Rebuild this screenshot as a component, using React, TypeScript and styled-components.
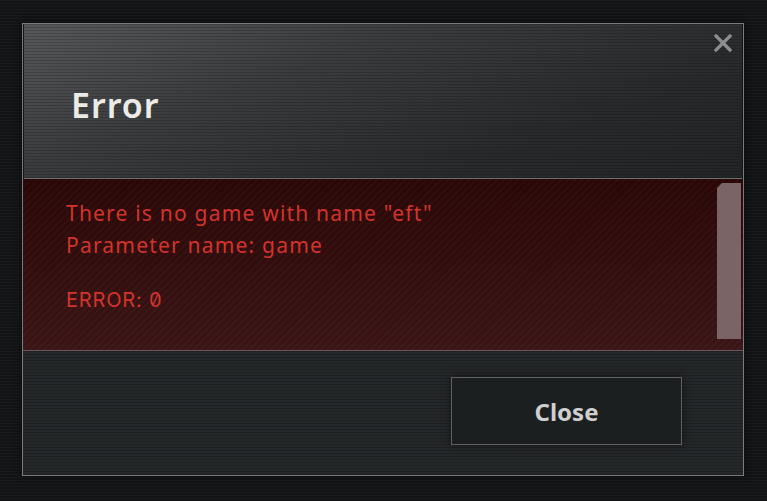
import styled, { createGlobalStyle } from 'styled-components';

const GlobalStyle = createGlobalStyle`
  html, body {
    margin: 0;
    padding: 0;
  }
  body {
    width: 767px;
    height: 501px;
    overflow: hidden;
    background-color: #111315;
    background-image: repeating-linear-gradient(
      180deg,
      rgba(255, 255, 255, 0.03) 0px,
      rgba(255, 255, 255, 0.03) 1px,
      rgba(0, 0, 0, 0) 1px,
      rgba(0, 0, 0, 0) 3px
    );
    font-family: 'Noto Sans', 'DejaVu Sans', sans-serif;
  }
`;

export default () => {
  return (
    <>
      <GlobalStyle />
      <Page>
        <Dialog>
          <Header>
            <Title>Error</Title>
            <CloseIcon aria-label="close">
              <svg width="18" height="18" viewBox="0 0 18 18">
                <path
                  d="M2 2 L16 16 M16 2 L2 16"
                  stroke="#8e8e8e"
                  strokeWidth="3.2"
                  strokeLinecap="square"
                />
              </svg>
            </CloseIcon>
          </Header>
          <Body>
            <Message>
              <Line>There is no game with name "eft"</Line>
              <Line>Parameter name: game</Line>
              <Code>ERROR: 0</Code>
            </Message>
            <Scrollbar />
          </Body>
          <Footer>
            <Button>Close</Button>
          </Footer>
        </Dialog>
      </Page>
    </>
  );
};

const Page = styled.div`
  padding: 23px 0 0 22px;
`;

const Dialog = styled.div`
  width: 722px;
  height: 453px;
  box-sizing: border-box;
  border: 1px solid #7a7b7c;
  display: flex;
  flex-direction: column;
  box-shadow: 0 0 6px rgba(0, 0, 0, 0.6);
`;

const Header = styled.div`
  position: relative;
  height: 155px;
  box-sizing: border-box;
  border-bottom: 1px solid #6e6f70;
  margin: 0 1px;
  display: flex;
  align-items: center;
  padding-left: 47px;
  background-color: #2c2d2f;
  background-image: repeating-linear-gradient(
      180deg,
      rgba(0, 0, 0, 0.18) 0px,
      rgba(0, 0, 0, 0.18) 1px,
      rgba(0, 0, 0, 0) 1px,
      rgba(0, 0, 0, 0) 3px
    ),
    linear-gradient(160deg, #56585a 0%, #3b3c3e 35%, #2a2b2d 70%, #232426 100%);
`;

const Title = styled.div`
  font-size: 34px;
  font-weight: 600;
  letter-spacing: 1px;
  color: #ecebe8;
  margin-top: 8px;
`;

const CloseIcon = styled.div`
  position: absolute;
  top: 10px;
  right: 10px;
  width: 18px;
  height: 18px;
  display: flex;
`;

const Body = styled.div`
  height: 172px;
  box-sizing: border-box;
  border-bottom: 1px solid #6a5a5c;
  display: flex;
  background-color: #300c0c;
  background-image: repeating-linear-gradient(
      135deg,
      rgba(255, 255, 255, 0.025) 0px,
      rgba(255, 255, 255, 0.025) 2px,
      rgba(0, 0, 0, 0) 2px,
      rgba(0, 0, 0, 0) 5px
    ),
    linear-gradient(180deg, #2a0707 0%, #320d0d 50%, #3b1515 100%);
`;

const Message = styled.div`
  flex: 1;
  padding: 18px 0 0 43px;
  color: #d2342c;
  font-size: 21px;
  line-height: 32px;
  letter-spacing: 1.2px;
`;

const Line = styled.div``;

const Code = styled.div`
  margin-top: 23px;
  font-family: 'Inter', 'Noto Sans', sans-serif;
  font-variant-numeric: slashed-zero;
  font-size: 20px;
  letter-spacing: 0.8px;
`;

const Scrollbar = styled.div`
  width: 24px;
  margin: 4px 2px 11px 0;
  background: #7b6466;
  clip-path: polygon(5px 0, 100% 0, 100% 100%, 0 100%, 0 5px);
`;

const Footer = styled.div`
  flex: 1;
  display: flex;
  justify-content: flex-end;
  align-items: flex-start;
  padding: 26px 61px 0 0;
  background-color: #25282a;
  background-image: repeating-linear-gradient(
    180deg,
    rgba(0, 0, 0, 0.22) 0px,
    rgba(0, 0, 0, 0.22) 1px,
    rgba(0, 0, 0, 0) 1px,
    rgba(0, 0, 0, 0) 3px
  );
`;

const Button = styled.div`
  width: 231px;
  height: 68px;
  box-sizing: border-box;
  border: 1px solid #5f6162;
  background: #1c1f20;
  box-shadow: 0 0 8px rgba(0, 0, 0, 0.5);
  display: flex;
  align-items: center;
  justify-content: center;
  color: #cfcfcf;
  font-size: 24px;
  font-weight: 700;
`;
